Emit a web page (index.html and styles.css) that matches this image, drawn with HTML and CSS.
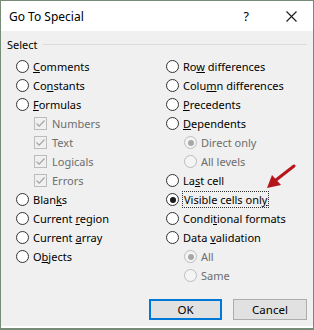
FILE: index.html
```html
<!DOCTYPE html>
<html lang="en">
<head>
  <meta charset="UTF-8">
  <title>Go To Special</title>
  <link rel="stylesheet" href="styles.css">
</head>
<body>
  <div class="dialog">
    <!-- barra de titulo -->
    <div class="titlebar">
      <span class="title">Go To Special</span>
      <span class="help">?</span>
      <svg class="close" width="11" height="11" viewBox="0 0 11 11">
        <path d="M0.5 0.5 L10.5 10.5 M10.5 0.5 L0.5 10.5" stroke="#1a1a1a" stroke-width="1.1" fill="none"/>
      </svg>
    </div>

    <div class="content">
      <div class="group-label"><span>Select</span><div class="rule"></div></div>

      <div class="columns">
        <div class="col">
          <div class="row"><span class="radio"></span><span><u>C</u>omments</span></div>
          <div class="row"><span class="radio"></span><span>Co<u>n</u>stants</span></div>
          <div class="row"><span class="radio"></span><span><u>F</u>ormulas</span></div>
          <div class="row sub disabled"><span class="check"><svg width="11" height="11" viewBox="0 0 11 11"><path d="M1.5 5.5 L4.2 8.2 L9.5 2.5" stroke="#a4a4a4" stroke-width="1.2" fill="none"/></svg></span><span>Numbers</span></div>
          <div class="row sub disabled"><span class="check"><svg width="11" height="11" viewBox="0 0 11 11"><path d="M1.5 5.5 L4.2 8.2 L9.5 2.5" stroke="#a4a4a4" stroke-width="1.2" fill="none"/></svg></span><span>Text</span></div>
          <div class="row sub disabled"><span class="check"><svg width="11" height="11" viewBox="0 0 11 11"><path d="M1.5 5.5 L4.2 8.2 L9.5 2.5" stroke="#a4a4a4" stroke-width="1.2" fill="none"/></svg></span><span>Logicals</span></div>
          <div class="row sub disabled"><span class="check"><svg width="11" height="11" viewBox="0 0 11 11"><path d="M1.5 5.5 L4.2 8.2 L9.5 2.5" stroke="#a4a4a4" stroke-width="1.2" fill="none"/></svg></span><span>Errors</span></div>
          <div class="row"><span class="radio"></span><span>Blan<u>k</u>s</span></div>
          <div class="row"><span class="radio"></span><span>Current <u>r</u>egion</span></div>
          <div class="row"><span class="radio"></span><span>Current <u>a</u>rray</span></div>
          <div class="row"><span class="radio"></span><span>O<u>b</u>jects</span></div>
        </div>
        <div class="col">
          <div class="row"><span class="radio"></span><span>Ro<u>w</u> differences</span></div>
          <div class="row"><span class="radio"></span><span>Colu<u>m</u>n differences</span></div>
          <div class="row"><span class="radio"></span><span><u>P</u>recedents</span></div>
          <div class="row"><span class="radio"></span><span><u>D</u>ependents</span></div>
          <div class="row sub disabled"><span class="radio checked"></span><span>Direct only</span></div>
          <div class="row sub disabled"><span class="radio"></span><span>All levels</span></div>
          <div class="row"><span class="radio"></span><span>La<u>s</u>t cell</span></div>
          <div class="row"><span class="radio checked"></span><span class="focus">Visible cells onl<u>y</u></span></div>
          <div class="row"><span class="radio"></span><span>Condi<u>t</u>ional formats</span></div>
          <div class="row"><span class="radio"></span><span>Data <u>v</u>alidation</span></div>
          <div class="row sub disabled"><span class="radio checked"></span><span>All</span></div>
          <div class="row sub disabled"><span class="radio"></span><span>Same</span></div>
        </div>
      </div>

      <div class="buttons">
        <button class="btn default">OK</button>
        <button class="btn">Cancel</button>
      </div>
    </div>

    <!-- flecha roja de anotacion -->
    <svg class="arrow" width="40" height="32" viewBox="0 0 40 32">
      <path d="M30 2 L12 16" stroke="#b5161c" stroke-width="3" stroke-linecap="round" fill="none"/>
      <path d="M3 24 L8 11 L17 21 Z" fill="#b5161c"/>
    </svg>
  </div>
</body>
</html>
```

FILE: styles.css
```css
/* ----- GENERAL ----- */
body {
  margin: 0;
  background: #ffffff;
  font-family: 'Noto Sans', 'Open Sans', sans-serif;
  font-size: 11px;
  color: #000;
}

.dialog {
  position: relative;
  box-sizing: border-box;
  width: 314px;
  height: 330px;
  border: 1px solid #768c76;
  border-bottom-width: 2px;
  background: #f0f0f0;
  box-shadow: inset 0 -2px 0 #ffffff;
  display: flex;
  flex-direction: column;
}

/* ----- TITLE BAR ----- */
.titlebar {
  height: 30px;
  background: #ffffff;
  display: flex;
  align-items: center;
  padding-left: 8px;
}

.title {
  flex: 1;
  font-size: 12px;
}

.help {
  font-size: 12.5px;
  margin-right: 37px;
}

.close {
  margin-right: 16px;
}

/* ----- CONTENT ----- */
.content {
  flex: 1;
  padding: 5px 0 0 0;
}

.group-label {
  display: flex;
  align-items: center;
  height: 17px;
  padding-left: 6px;
  padding-right: 6px;
  gap: 5px;
}

.rule {
  flex: 1;
  height: 1px;
  background: #dcdcdc;
}

.columns {
  display: grid;
  grid-template-columns: 150px 150px;
  padding-left: 15px;
  margin-top: 4px;
}

.row {
  height: 19px;
  display: flex;
  align-items: center;
  gap: 4px;
  white-space: nowrap;
}

.row.sub {
  padding-left: 18px;
}

.disabled {
  color: #6d6d6d;
}

.radio {
  box-sizing: border-box;
  width: 13px;
  height: 13px;
  border: 1px solid #333333;
  border-radius: 50%;
  background: #ffffff;
  position: relative;
  flex-shrink: 0;
}

.radio.checked::after {
  content: "";
  position: absolute;
  left: 2.5px;
  top: 2.5px;
  width: 6px;
  height: 6px;
  border-radius: 50%;
  background: #1a1a1a;
}

.disabled .radio {
  border-color: #bcbcbc;
  background: #f4f4f4;
}

.disabled .radio.checked::after {
  background: #a8a8a8;
}

.check {
  box-sizing: border-box;
  width: 13px;
  height: 13px;
  border: 1px solid #bcbcbc;
  background: #f0f0f0;
  display: flex;
  align-items: center;
  justify-content: center;
  margin-right: 1px;
  flex-shrink: 0;
}

.focus {
  outline: 1px dotted #333333;
  outline-offset: 0;
  padding: 0 1px;
  line-height: 15px;
}

/* ----- BUTTONS ----- */
.buttons {
  display: flex;
  justify-content: flex-end;
  gap: 11px;
  padding-right: 6px;
  margin-top: 14px;
}

.btn {
  box-sizing: border-box;
  height: 21px;
  width: 74px;
  font-family: inherit;
  font-size: 11.5px;
  background: #e1e1e1;
  border: 1px solid #adadad;
  padding: 0;
}

.btn.default {
  width: 73px;
  border: 2px solid #0078d7;
}

/* ----- ANOTACION ----- */
.arrow {
  position: absolute;
  left: 263px;
  top: 163px;
}
```
